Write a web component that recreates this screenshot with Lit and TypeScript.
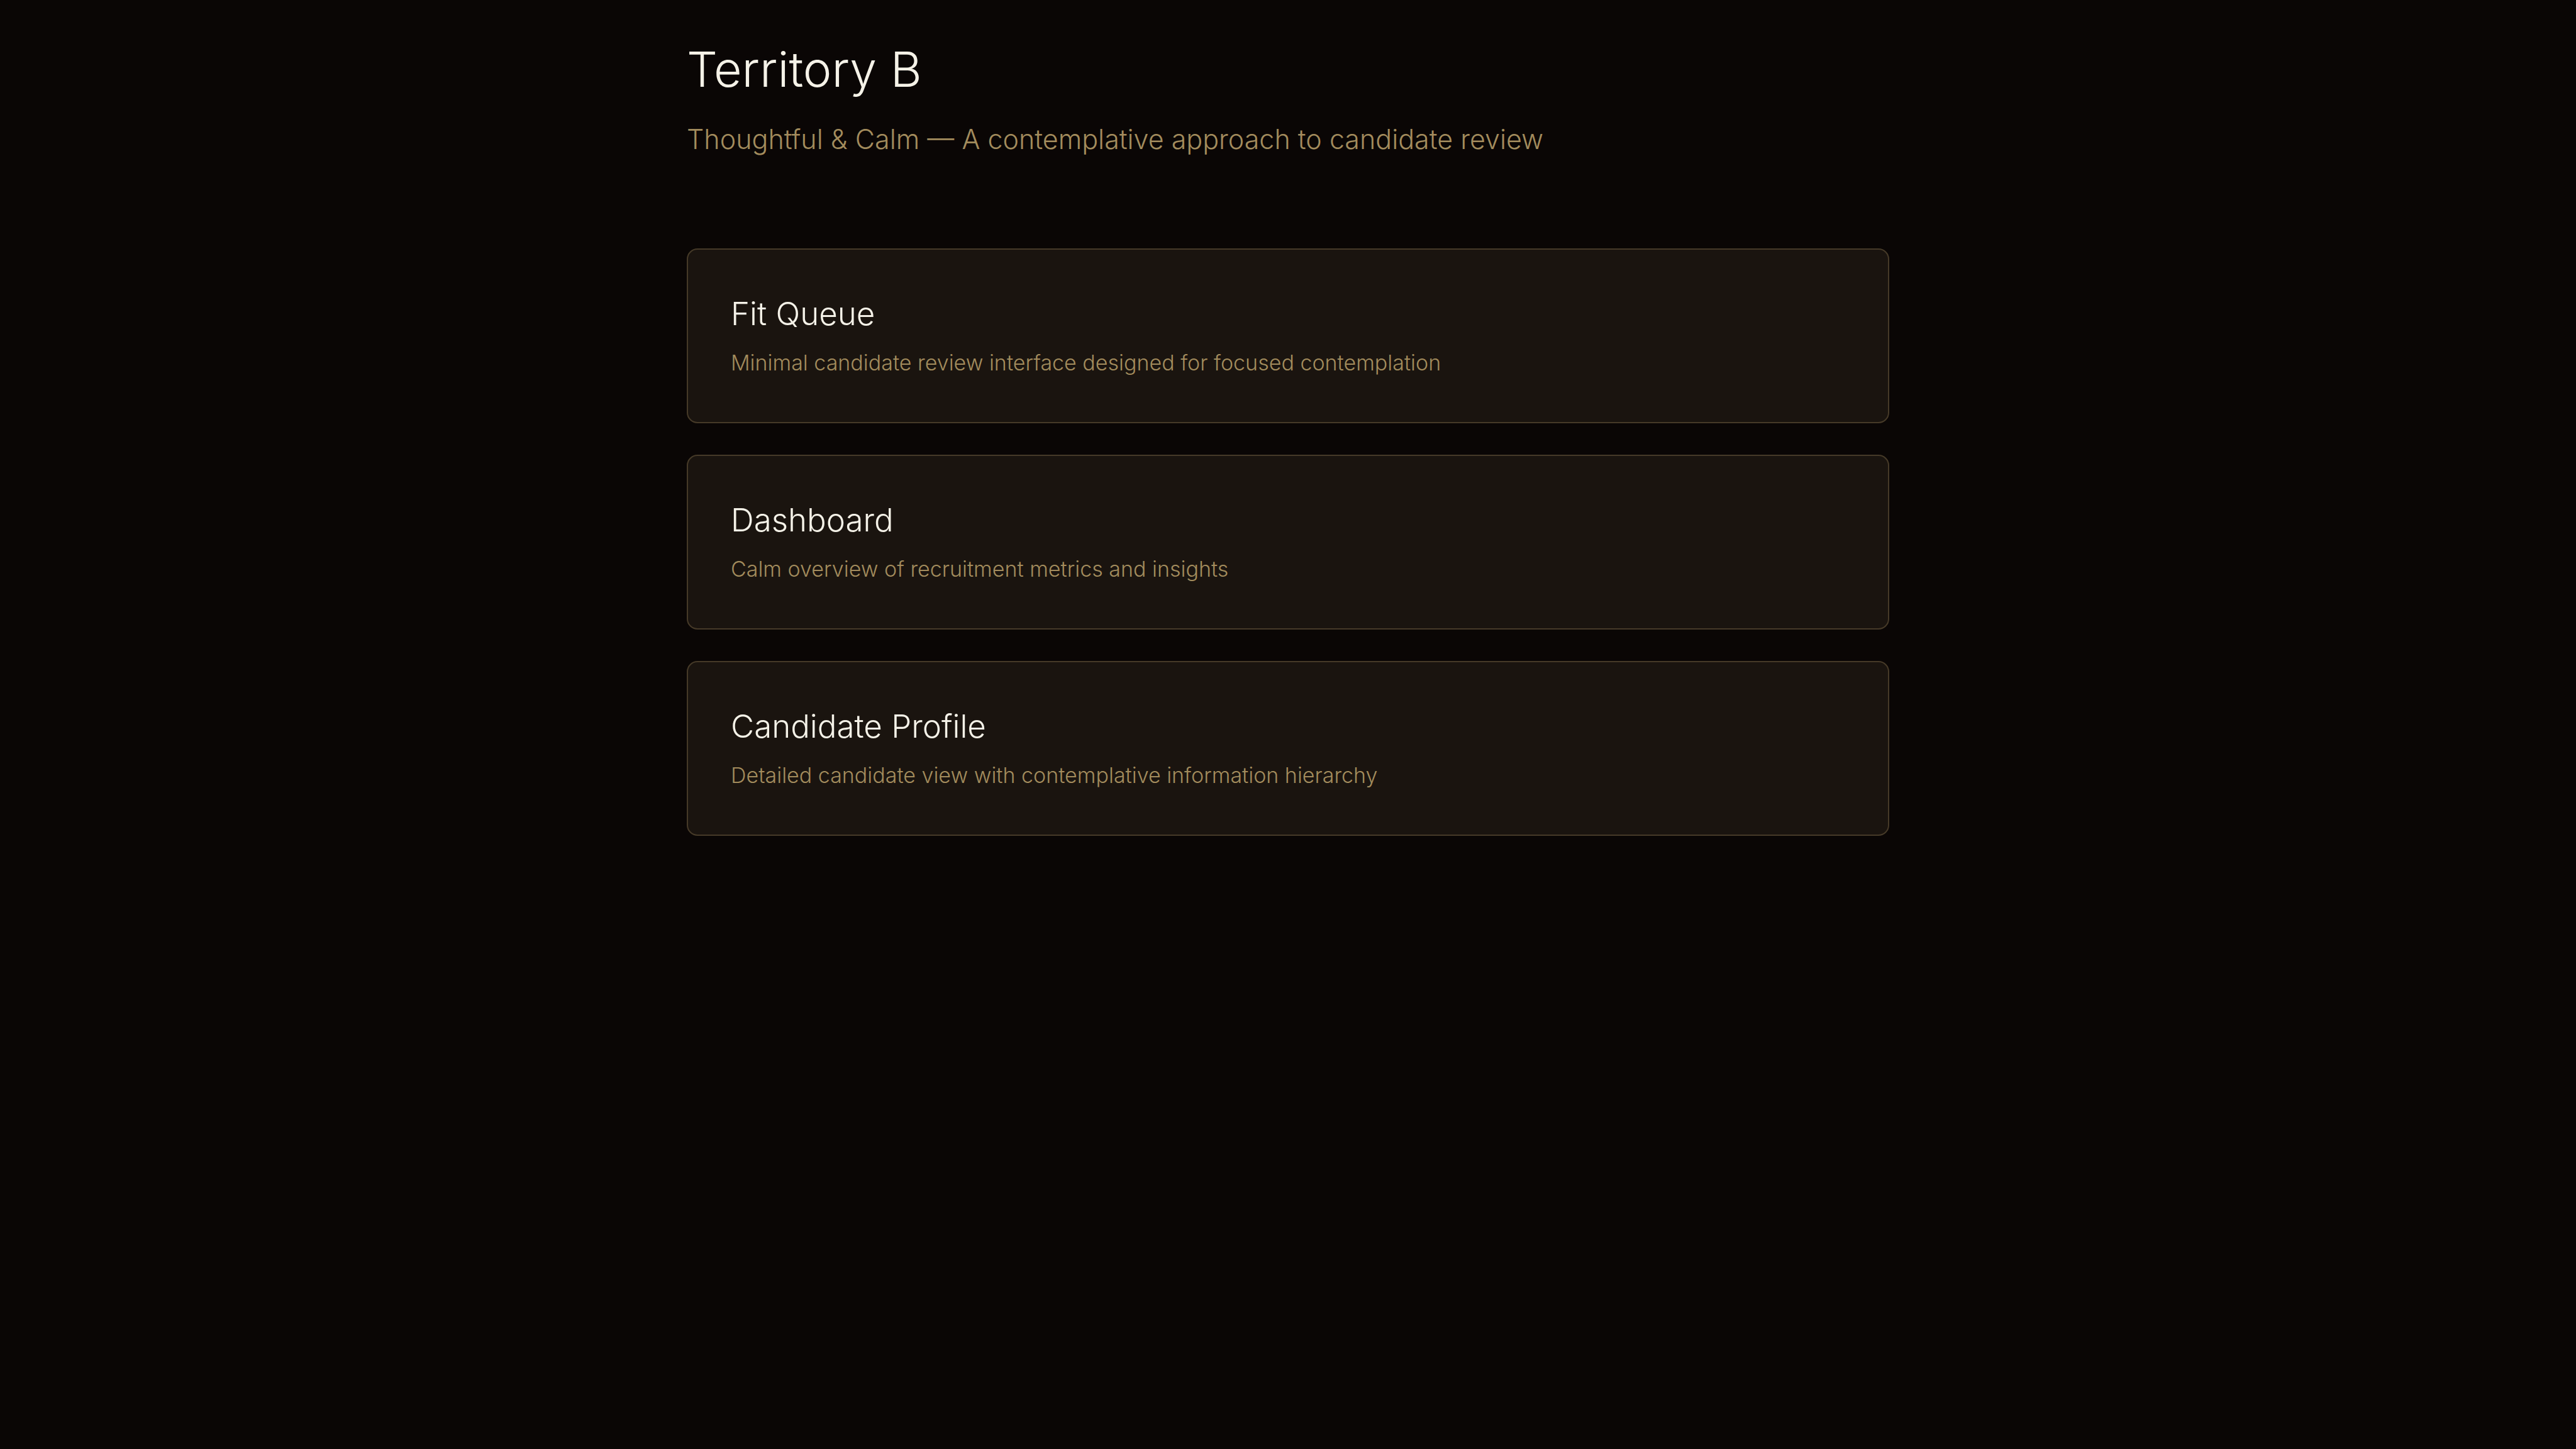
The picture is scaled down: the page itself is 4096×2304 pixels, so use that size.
import { LitElement, html, css } from "lit";
import { customElement } from "lit/decorators.js";

interface Screen {
  title: string;
  description: string;
  href: string;
}

const SCREENS: Screen[] = [
  {
    title: "Fit Queue",
    description: "Minimal candidate review interface designed for focused contemplation",
    href: "#fit-queue",
  },
  {
    title: "Dashboard",
    description: "Calm overview of recruitment metrics and insights",
    href: "#dashboard",
  },
  {
    title: "Candidate Profile",
    description: "Detailed candidate view with contemplative information hierarchy",
    href: "#candidate-profile",
  },
];

@customElement("app-root")
export class AppRoot extends LitElement {
  static styles = css`
    :host {
      display: block;
      box-sizing: border-box;
      min-height: 100vh;
      padding: 68px;
      background: #0a0605;
      color: #f5f2e8;
      font-family: Inter, "Liberation Sans", sans-serif;
      font-weight: 300;
    }

    .page {
      max-width: 1912px;
      margin: 0 auto;
    }

    .header {
      margin-bottom: 137px;
    }

    .heading {
      margin: 0 0 31px;
      font-size: 77px;
      line-height: 85px;
      font-weight: 300;
    }

    .tagline {
      margin: 0;
      font-size: 43px;
      line-height: 74px;
      color: #a38c5d;
    }

    .cards {
      display: grid;
      gap: 50px;
    }

    .card {
      display: block;
      padding: 68px;
      border: 2px solid #463a28;
      border-radius: 17px;
      background: #1a140f;
      color: inherit;
      text-decoration: none;
    }

    .card-title {
      margin: 0 0 18px;
      font-size: 51px;
      line-height: 68px;
      font-weight: 300;
    }

    .card-text {
      margin: 0;
      font-size: 34px;
      line-height: 52px;
      color: #a38c5d;
    }
  `;

  render() {
    return html`
      <main class="page">
        <header class="header">
          <h1 class="heading">Territory B</h1>
          <p class="tagline">Thoughtful &amp; Calm — A contemplative approach to candidate review</p>
        </header>
        <nav class="cards" aria-label="Screens">
          ${SCREENS.map(
            (screen) => html`
              <a class="card" href=${screen.href}>
                <h2 class="card-title">${screen.title}</h2>
                <p class="card-text">${screen.description}</p>
              </a>
            `
          )}
        </nav>
      </main>
    `;
  }
}
